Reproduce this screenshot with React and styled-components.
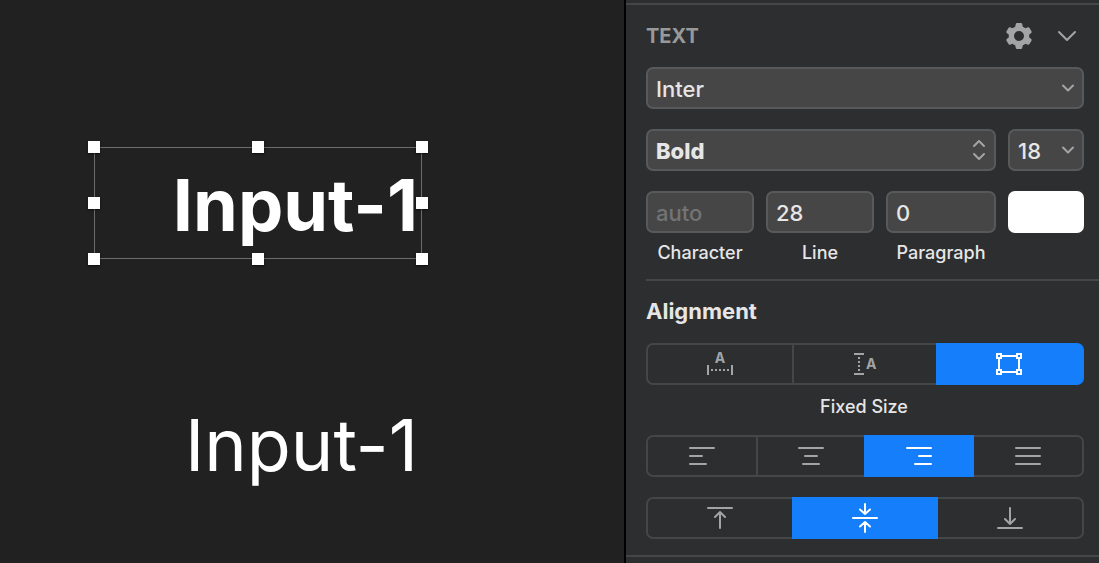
import React, { useState } from 'react';
import styled, { createGlobalStyle, css } from 'styled-components';

const colors = {
  canvas: '#212121',
  panel: '#2d2e30',
  field: '#464646',
  fieldBorder: '#58595a',
  line: '#454648',
  text: '#e6e6e7',
  muted: '#98999b',
  icon: '#a3a4a5',
  accent: '#147efb',
};

const GlobalStyle = createGlobalStyle`
  *, *::before, *::after { box-sizing: border-box; }
  body {
    margin: 0;
    background: ${colors.canvas};
    font-family: Inter, 'Liberation Sans', sans-serif;
    font-weight: 500;
    color: ${colors.text};
  }
  button, input, select { font: inherit; color: inherit; margin: 0; }
`;

const Editor = styled.div`
  display: flex;
  min-height: 100vh;
`;

const Canvas = styled.main`
  flex: 1;
  min-width: 0;
  padding: 147px 202px 0 94px;
  display: flex;
  flex-direction: column;
  gap: 128px;
`;

const TextLayer = styled.div`
  position: relative;
  padding: 2px 4px 0 0;
  height: 112px;
  font-size: 72px;
  line-height: 112px;
  font-weight: ${(p) => p.$weight};
  text-align: right;
  white-space: nowrap;
  color: #fff;
`;

const Selection = styled.div`
  position: absolute;
  inset: 0;
  outline: 1px solid #6c6c6c;
  outline-offset: -1px;
`;

const Handle = styled.span`
  position: absolute;
  left: ${(p) => p.$x};
  top: ${(p) => p.$y};
  width: 12px;
  height: 12px;
  transform: translate(-50%, -50%);
  background: #fff;
  box-shadow: 0 1px 2px rgba(0, 0, 0, 0.6);
`;

const Inspector = styled.aside`
  width: 475px;
  padding-top: 3px;
  background: ${colors.panel};
  border-left: 2px solid #000;
`;

const Section = styled.section`
  padding: 10px 15px 16px 20px;
  border: solid ${colors.line};
  border-width: 2px 0;
`;

const Header = styled.header`
  display: flex;
  align-items: center;
  justify-content: space-between;
  height: 42px;
  margin-bottom: 10px;
`;

const SectionTitle = styled.h2`
  margin: 0;
  font-size: 20px;
  line-height: 24px;
  font-weight: 700;
  color: ${colors.muted};
`;

const HeaderActions = styled.div`
  display: flex;
  align-items: center;
  gap: 25px;
  margin-right: 7px;
`;

const IconButton = styled.button`
  display: grid;
  padding: 0;
  border: 0;
  background: none;
  color: ${colors.icon};
`;

const FieldGrid = styled.div`
  display: grid;
  grid-template-columns: 108fr 108fr 110fr 76fr;
  column-gap: 12px;
`;

const fieldBox = css`
  display: block;
  width: 100%;
  height: 42px;
  padding: 2px 8px 0;
  border: 2px solid ${colors.fieldBorder};
  border-radius: 7px;
  background: ${colors.field};
  font-size: 22px;
  font-weight: ${(p) => p.$weight || 500};
  outline: none;
`;

const SelectBox = styled.div`
  position: relative;
  margin-bottom: 20px;
  grid-column: ${(p) => p.$span || 'auto'};
`;

const Select = styled.select`
  ${fieldBox}
  appearance: none;
`;

const SelectMark = styled.span`
  position: absolute;
  top: 0;
  bottom: 0;
  right: 10px;
  display: flex;
  align-items: center;
  color: ${colors.icon};
  pointer-events: none;
`;

const NumberField = styled.label`
  font-size: 18px;
  line-height: 22px;
  text-align: center;
`;

const Input = styled.input`
  ${fieldBox}
  margin-bottom: 9px;
  &::placeholder { color: #737475; opacity: 1; }
`;

const Swatch = styled.button`
  height: 42px;
  border: 0;
  border-radius: 7px;
  background: #fff;
`;

const Group = styled.div`
  margin: 15px -15px 0 0;
  padding: 16px 15px 0 0;
  border-top: 2px solid ${colors.line};
`;

const GroupTitle = styled.h3`
  margin: 0 0 18px;
  font-size: 22px;
  line-height: 28px;
  font-weight: 700;
`;

const Segments = styled.div`
  display: grid;
  grid-template-columns: ${(p) => p.$columns};
  height: 42px;
`;

const Segment = styled.button`
  display: grid;
  place-items: center;
  padding: 0;
  border: solid ${colors.line};
  border-width: 2px 0 2px 2px;
  background: none;
  color: ${colors.icon};
  &:first-child { border-radius: 7px 0 0 7px; }
  &:last-child { border-right-width: 2px; border-radius: 0 7px 7px 0; }
  &[aria-pressed='true'] {
    border-color: ${colors.accent};
    border-left-width: 0;
    background: ${colors.accent};
    color: #fff;
  }
  &[aria-pressed='true'] + & { border-left-width: 0; }
`;

const Caption = styled.p`
  margin: 11px 0 17px;
  padding-right: 2px;
  font-size: 18px;
  line-height: 22px;
  text-align: center;
`;

const Stack = styled.div`
  display: grid;
  gap: 20px;
`;

const Glyph = styled.svg.attrs({ fill: 'none', stroke: 'currentColor', 'aria-hidden': true })`
  display: block;
  overflow: visible;
  stroke-width: 2;
  stroke-linecap: ${(p) => p.$cap || 'round'};
  stroke-linejoin: ${(p) => p.$join || 'round'};
`;

const Letter = styled.text`
  font-size: 14px;
  font-weight: 700;
  fill: currentColor;
  stroke: none;
`;

const Chevron = () => (
  <Glyph width="12" height="8"><path d="M1 1.5 6 6.5 11 1.5" /></Glyph>
);

const Stepper = () => (
  <Glyph width="14" height="22"><path d="M2 7 7 2 12 7M2 15 7 20 12 15" /></Glyph>
);

const Gear = () => (
  <Glyph width="26" height="28" viewBox="0 0 26 28">
    <path
      stroke="none"
      fill="currentColor"
      fillRule="evenodd"
      d="M11 1h4q1 0 1.200 1l.6 2.700q1.400.5 2.600 1.500l2.600-.9q1-.3 1.500.6l2 3.400q.5.900-.3 1.600L23.100 12.800q.2 1.200 0 2.400l2.100 1.900q.8.700.3 1.600l-2 3.400q-.5.900-1.500.6l-2.600-.9q-1.200 1-2.600 1.500L16.200 26Q16 27 15 27h-4q-1 0-1.200-1l-.6-2.700q-1.400-.5-2.600-1.500l-2.600.9q-1 .3-1.500-.6l-2-3.400q-.5-.9.300-1.600l2.100-1.900q-.2-1.200 0-2.400L.8 10.900Q0 10.200.5 9.300l2-3.400q.5-.9 1.500-.6l2.600.9q1.200-1 2.600-1.500L9.800 2Q10 1 11 1ZM13 9a5 5 0 1 0 0 10a5 5 0 0 0 0-10Z"
    />
  </Glyph>
);

const AutoWidth = () => (
  <Glyph width="26" height="24" $cap="butt">
    <Letter x="13" y="11" textAnchor="middle">A</Letter>
    <path d="M1 13v10M25 13v10" />
    <path d="M4 18h18" strokeDasharray="2 2" />
  </Glyph>
);

const AutoHeight = () => (
  <Glyph width="24" height="24" $cap="butt">
    <path d="M1 2h10M1 22h10" />
    <path d="M6 5v14" strokeDasharray="2 2" />
    <Letter x="13" y="17">A</Letter>
  </Glyph>
);

const FixedSize = () => (
  <Glyph width="26" height="22" $cap="butt" $join="miter">
    <path d="M6 3h14M6 19h14M3 6v10M23 6v10" />
    <path d="M1 1h4v4h-4ZM21 1h4v4h-4ZM1 17h4v4h-4ZM21 17h4v4h-4Z" />
  </Glyph>
);

const lineGlyph = (d) => () => (
  <Glyph width="26" height="18"><path d={d} /></Glyph>
);
const AlignLeft = lineGlyph('M1 1h24M1 9h12M1 17h16');
const AlignCenter = lineGlyph('M1 1h24M7 9h12M5 17h16');
const AlignRight = lineGlyph('M1 1h24M13 9h12M9 17h16');
const AlignJustify = lineGlyph('M1 1h24M1 9h24M1 17h24');

const AlignTop = () => (
  <Glyph width="26" height="24"><path d="M1 2h24M13 22V6M8 11 13 6 18 11" /></Glyph>
);
const AlignMiddle = () => (
  <Glyph width="26" height="30">
    <path d="M1 15h24M13 1v10M8 6.500 13 11 18 6.500M13 29V19M8 23.500 13 19 18 23.500" />
  </Glyph>
);
const AlignBottom = () => (
  <Glyph width="26" height="24"><path d="M1 22h24M13 2v16M8 13 13 18 18 13" /></Glyph>
);

const sizing = [['Auto Width', AutoWidth], ['Auto Height', AutoHeight], ['Fixed Size', FixedSize]];
const horizontal = [
  ['Align Left', AlignLeft],
  ['Align Center', AlignCenter],
  ['Align Right', AlignRight],
  ['Justify', AlignJustify],
];
const vertical = [['Align Top', AlignTop], ['Align Middle', AlignMiddle], ['Align Bottom', AlignBottom]];

const handles = [
  ['0%', '0%'], ['50%', '0%'], ['100%', '0%'],
  ['0%', '50%'], ['100%', '50%'],
  ['0%', '100%'], ['50%', '100%'], ['100%', '100%'],
];

function SegmentedControl({ label, items, columns, value, onChange }) {
  return (
    <Segments role="group" aria-label={label} $columns={columns}>
      {items.map(([name, Icon]) => (
        <Segment
          key={name}
          type="button"
          aria-label={name}
          aria-pressed={value === name}
          onClick={() => onChange(name)}
        >
          <Icon />
        </Segment>
      ))}
    </Segments>
  );
}

export default function App() {
  const [size, setSize] = useState('Fixed Size');
  const [alignX, setAlignX] = useState('Align Right');
  const [alignY, setAlignY] = useState('Align Middle');

  return (
    <>
      <GlobalStyle />
      <Editor>
        <Canvas>
          <TextLayer $weight={700}>
            Input-1
            <Selection>
              {handles.map(([x, y]) => <Handle key={x + y} $x={x} $y={y} />)}
            </Selection>
          </TextLayer>
          <TextLayer $weight={400}>Input-1</TextLayer>
        </Canvas>
        <Inspector>
          <Section>
            <Header>
              <SectionTitle>TEXT</SectionTitle>
              <HeaderActions>
                <IconButton type="button" aria-label="Text settings"><Gear /></IconButton>
                <IconButton type="button" aria-label="Collapse">
                  <Glyph width="20" height="12"><path d="M2 2 10 10 18 2" /></Glyph>
                </IconButton>
              </HeaderActions>
            </Header>
            <SelectBox>
              <Select aria-label="Font family" defaultValue="Inter"><option>Inter</option></Select>
              <SelectMark><Chevron /></SelectMark>
            </SelectBox>
            <FieldGrid>
              <SelectBox $span="span 3">
                <Select aria-label="Font weight" $weight={800} defaultValue="Bold"><option>Bold</option></Select>
                <SelectMark><Stepper /></SelectMark>
              </SelectBox>
              <SelectBox>
                <Select aria-label="Font size" defaultValue="18"><option>18</option></Select>
                <SelectMark><Chevron /></SelectMark>
              </SelectBox>
              <NumberField><Input placeholder="auto" />Character</NumberField>
              <NumberField><Input defaultValue="28" />Line</NumberField>
              <NumberField><Input defaultValue="0" />Paragraph</NumberField>
              <Swatch type="button" aria-label="Text color" />
            </FieldGrid>
            <Group>
              <GroupTitle>Alignment</GroupTitle>
              <SegmentedControl label="Sizing" items={sizing} columns="146fr 144fr 148fr" value={size} onChange={setSize} />
              <Caption>{size}</Caption>
              <Stack>
                <SegmentedControl label="Horizontal alignment" items={horizontal} columns="110fr 108fr 110fr 110fr" value={alignX} onChange={setAlignX} />
                <SegmentedControl label="Vertical alignment" items={vertical} columns="146fr 146fr 146fr" value={alignY} onChange={setAlignY} />
              </Stack>
            </Group>
          </Section>
        </Inspector>
      </Editor>
    </>
  );
}
